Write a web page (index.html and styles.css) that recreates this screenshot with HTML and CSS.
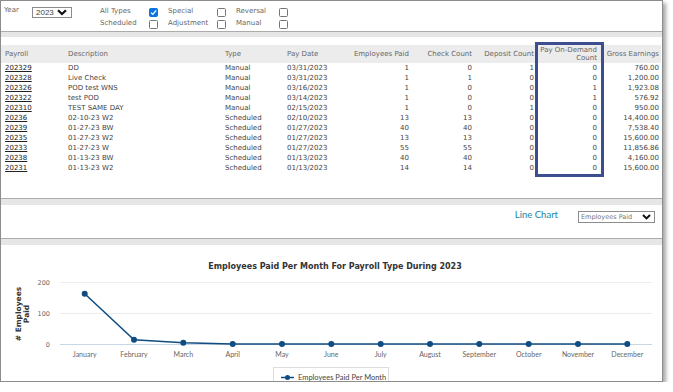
FILE: index.html
```html
<!DOCTYPE html>
<html>
<head>
<meta charset="utf-8">
<link rel="stylesheet" href="styles.css">
</head>
<body>
<div class="frame">
  <div class="filters">
    <span class="year-label">Year</span>
    <div class="year-select"><span>2023</span>
      <svg class="chev" width="10" height="7" viewBox="0 0 10 7"><path d="M1 1.2 L5 5 L9 1.2" fill="none" stroke="#111" stroke-width="2.2"/></svg>
    </div>
    <div class="types">
      <span class="lbl">All Types</span><span class="cb checked"><svg width="9" height="9" viewBox="0 0 9 9"><path d="M2 4.6 L3.8 6.4 L7.2 2.4" fill="none" stroke="#fff" stroke-width="1.3"/></svg></span>
      <span class="lbl">Special</span><span class="cb"></span>
      <span class="lbl">Reversal</span><span class="cb"></span>
      <span class="lbl">Scheduled</span><span class="cb"></span>
      <span class="lbl">Adjustment</span><span class="cb"></span>
      <span class="lbl">Manual</span><span class="cb"></span>
    </div>
  </div>
  <div class="sep"></div>
  <div class="grid-panel">
    <table class="grid">
      <colgroup>
        <col class="w63"><col class="w157"><col class="w62"><col class="w67"><col class="w62"><col class="w63"><col class="w62"><col class="w63"><col class="w61">
      </colgroup>
      <thead>
        <tr><th>Payroll</th><th>Description</th><th>Type</th><th>Pay Date</th><th class="r">Employees Paid</th><th class="r">Check Count</th><th class="r">Deposit Count</th><th class="r">Pay On-Demand<br>Count</th><th class="r last">Gross Earnings</th></tr>
      </thead>
      <tbody>
        <tr><td><a>202329</a></td><td>DD</td><td>Manual</td><td>03/31/2023</td><td class="r">1</td><td class="r">0</td><td class="r">1</td><td class="r">0</td><td class="r last">760.00</td></tr>
        <tr><td><a>202328</a></td><td>Live Check</td><td>Manual</td><td>03/31/2023</td><td class="r">1</td><td class="r">1</td><td class="r">0</td><td class="r">0</td><td class="r last">1,200.00</td></tr>
        <tr><td><a>202326</a></td><td>POD test WNS</td><td>Manual</td><td>03/16/2023</td><td class="r">1</td><td class="r">0</td><td class="r">0</td><td class="r">1</td><td class="r last">1,923.08</td></tr>
        <tr><td><a>202322</a></td><td>test POD</td><td>Manual</td><td>03/14/2023</td><td class="r">1</td><td class="r">0</td><td class="r">0</td><td class="r">1</td><td class="r last">576.92</td></tr>
        <tr><td><a>202310</a></td><td>TEST SAME DAY</td><td>Manual</td><td>02/15/2023</td><td class="r">1</td><td class="r">0</td><td class="r">1</td><td class="r">0</td><td class="r last">950.00</td></tr>
        <tr><td><a>20236</a></td><td>02-10-23 W2</td><td>Scheduled</td><td>02/10/2023</td><td class="r">13</td><td class="r">13</td><td class="r">0</td><td class="r">0</td><td class="r last">14,400.00</td></tr>
        <tr><td><a>20239</a></td><td>01-27-23 BW</td><td>Scheduled</td><td>01/27/2023</td><td class="r">40</td><td class="r">40</td><td class="r">0</td><td class="r">0</td><td class="r last">7,538.40</td></tr>
        <tr><td><a>20235</a></td><td>01-27-23 W2</td><td>Scheduled</td><td>01/27/2023</td><td class="r">13</td><td class="r">13</td><td class="r">0</td><td class="r">0</td><td class="r last">15,600.00</td></tr>
        <tr><td><a>20233</a></td><td>01-27-23 W</td><td>Scheduled</td><td>01/27/2023</td><td class="r">55</td><td class="r">55</td><td class="r">0</td><td class="r">0</td><td class="r last">11,856.86</td></tr>
        <tr><td><a>20238</a></td><td>01-13-23 BW</td><td>Scheduled</td><td>01/13/2023</td><td class="r">40</td><td class="r">40</td><td class="r">0</td><td class="r">0</td><td class="r last">4,160.00</td></tr>
        <tr><td><a>20231</a></td><td>01-13-23 W2</td><td>Scheduled</td><td>01/13/2023</td><td class="r">14</td><td class="r">14</td><td class="r">0</td><td class="r">0</td><td class="r last">15,600.00</td></tr>
      </tbody>
    </table>
    <div class="highlight"></div>
  </div>
  <div class="sep sep6"></div>
  <div class="controls">
    <span class="chart-type">Line Chart</span>
    <div class="metric-select"><span>Employees Paid</span>
      <svg class="chev" width="9" height="6" viewBox="0 0 9 6"><path d="M1 1 L4.5 4.4 L8 1" fill="none" stroke="#111" stroke-width="2"/></svg>
    </div>
  </div>
  <div class="sep sep6"></div>
  <div class="chart">
    <svg class="chart-svg" width="661" height="137" viewBox="1 244 661 137">
      <text class="title" x="335" y="268" text-anchor="middle">Employees Paid Per Month For Payroll Type During 2023</text>
      <line class="grid-line" x1="60" y1="281.5" x2="652" y2="281.5"/>
      <line class="grid-line" x1="60" y1="312.5" x2="652" y2="312.5"/>
      <line class="axis-line" x1="60" y1="343.5" x2="652" y2="343.5"/>
      <text class="ytick" x="50" y="284" text-anchor="end">200</text>
      <text class="ytick" x="50" y="315" text-anchor="end">100</text>
      <text class="ytick" x="50" y="346" text-anchor="end">0</text>
      <g transform="translate(22 313) rotate(-90)">
        <text class="ytitle" x="0" y="-1" text-anchor="middle">#  Employees</text>
        <text class="ytitle" x="0" y="7" text-anchor="middle">Paid</text>
      </g>
      <polyline class="series" points="84.7,292.8 134,338.7 183.3,341.8 232.7,343 282,343 331.3,343 380.7,343 430,343 479.3,343 528.7,343 578,343 627.3,343"/>
      <g class="dots">
        <circle cx="84.7" cy="292.8" r="3"/><circle cx="134" cy="338.7" r="3"/><circle cx="183.3" cy="341.8" r="3"/><circle cx="232.7" cy="343" r="3"/><circle cx="282" cy="343" r="3"/><circle cx="331.3" cy="343" r="3"/><circle cx="380.7" cy="343" r="3"/><circle cx="430" cy="343" r="3"/><circle cx="479.3" cy="343" r="3"/><circle cx="528.7" cy="343" r="3"/><circle cx="578" cy="343" r="3"/><circle cx="627.3" cy="343" r="3"/>
      </g>
      <g class="months" text-anchor="middle">
        <text x="84.7" y="356">January</text><text x="134" y="356">February</text><text x="183.3" y="356">March</text><text x="232.7" y="356">April</text><text x="282" y="356">May</text><text x="331.3" y="356">June</text><text x="380.7" y="356">July</text><text x="430" y="356">August</text><text x="479.3" y="356">September</text><text x="528.7" y="356">October</text><text x="578" y="356">November</text><text x="627.3" y="356">December</text>
      </g>
      <rect class="legend-box" x="273.5" y="366.5" width="115" height="20"/>
      <line class="legend-line" x1="281" y1="376.5" x2="294" y2="376.5"/>
      <circle class="legend-dot" cx="287.5" cy="376.5" r="2.5"/>
      <text class="legend-text" x="298" y="379">Employees Paid Per Month</text>
    </svg>
  </div>
</div>
</body>
</html>
```
FILE: styles.css
```css
html, body {
  margin: 0;
  padding: 0;
  background: #fff;
}
body {
  font-family: "DejaVu Sans", Verdana, sans-serif;
  font-size: 7px;
  color: #444;
}
.frame {
  width: 663px;
  height: 382px;
  box-sizing: border-box;
  border: 1px solid #8c8c8c;
  box-shadow: 3px 3px 4px rgba(0, 0, 0, 0.35);
  overflow: hidden;
  background: #fff;
}
.filters {
  height: 30px;
  display: flex;
  align-items: flex-start;
  padding-left: 3px;
  box-sizing: border-box;
  color: #666;
}
.year-label {
  width: 28px;
  margin-top: 5px;
  line-height: 8px;
}
.year-select {
  margin-top: 6px;
  width: 40px;
  height: 11px;
  box-sizing: border-box;
  border: 1px solid #8c8c8c;
  display: flex;
  align-items: center;
  justify-content: space-between;
  padding: 0 4px 0 3px;
  font-family: "Liberation Sans", Arial, sans-serif;
  font-size: 8px;
  color: #444;
}
.year-select .chev {
  display: block;
}
.types {
  margin-left: 28px;
  margin-top: 5px;
  display: grid;
  grid-template-columns: 49px 19px 49px 19px 43px 9px;
  grid-auto-rows: 12px;
  align-items: center;
}
.lbl {
  line-height: 10px;
  margin-top: -2px;
}
.cb {
  width: 9px;
  height: 9px;
  box-sizing: border-box;
  border: 1px solid #767676;
  border-radius: 1.5px;
  background: #fff;
  display: block;
}
.cb.checked {
  background: #0b74e0;
  border-color: #0b74e0;
}
.cb.checked svg {
  display: block;
  margin: -1px 0 0 -1px;
}
.sep {
  height: 6px;
  box-sizing: border-box;
  border-top: 1px solid #ababab;
  background: #e6e6e6;
}
.sep6 {
  height: 7px;
}
.grid-panel {
  position: relative;
  height: 161px;
  padding-top: 8px;
  box-sizing: border-box;
}
.grid {
  width: 660px;
  border-collapse: collapse;
  table-layout: fixed;
}
.w63 { width: 63px; }
.w157 { width: 157px; }
.w62 { width: 62px; }
.w67 { width: 67px; }
.w61 { width: 61px; }
.grid th {
  background: #ececec;
  height: 18px;
  padding: 0 0 0 4px;
  font-weight: normal;
  color: #666;
  text-align: left;
  line-height: 8px;
  vertical-align: middle;
  white-space: nowrap;
}
.grid td {
  height: 10px;
  padding: 0 0 0 4px;
  line-height: 10px;
  white-space: nowrap;
  color: #444;
}
.grid .r {
  text-align: right;
  padding: 0 3px 0 0;
}
.grid .last {
  padding-right: 2px;
}
.grid a {
  color: #222;
  text-decoration: underline;
}
.highlight {
  position: absolute;
  left: 534px;
  top: 5px;
  width: 69px;
  height: 135px;
  box-sizing: border-box;
  border: 3px solid #3c4e90;
}
.controls {
  height: 33px;
  display: flex;
  justify-content: flex-end;
  align-items: flex-start;
  padding-right: 7px;
  box-sizing: border-box;
}
.chart-type {
  margin-top: 4px;
  font-family: Lato, "Open Sans", sans-serif;
  font-size: 9.5px;
  line-height: 12px;
  color: #1a86a2;
}
.metric-select {
  margin-left: 20px;
  margin-top: 6px;
  width: 77px;
  height: 12px;
  box-sizing: border-box;
  border: 1px solid #8c8c8c;
  display: flex;
  align-items: center;
  justify-content: space-between;
  padding: 0 3px 0 2px;
  font-size: 6.5px;
  color: #777;
}
.metric-select .chev {
  display: block;
}
.chart {
  height: 137px;
}
.chart-svg {
  display: block;
}
.title {
  font-family: "DejaVu Sans", Verdana, sans-serif;
  font-weight: bold;
  font-size: 8px;
  fill: #333;
}
.grid-line {
  stroke: #ececec;
  stroke-width: 1;
}
.axis-line {
  stroke: #c9d6e3;
  stroke-width: 1;
}
.ytick {
  font-family: "DejaVu Sans", Verdana, sans-serif;
  font-size: 6.5px;
  fill: #666;
}
.ytitle {
  font-family: "DejaVu Sans", Verdana, sans-serif;
  font-size: 7.5px;
  font-weight: bold;
  fill: #333;
}
.series {
  fill: none;
  stroke: #0f4c81;
  stroke-width: 1.5;
}
.dots circle {
  fill: #0f4c81;
}
.months text {
  font-family: Lato, "Open Sans", sans-serif;
  font-size: 7px;
  fill: #666;
}
.legend-box {
  fill: #fff;
  stroke: #dddddd;
  stroke-width: 1;
}
.legend-line {
  stroke: #0f4c81;
  stroke-width: 1.5;
}
.legend-dot {
  fill: #0f4c81;
}
.legend-text {
  font-family: Lato, "Open Sans", sans-serif;
  font-size: 7.5px;
  fill: #444;
}
```
